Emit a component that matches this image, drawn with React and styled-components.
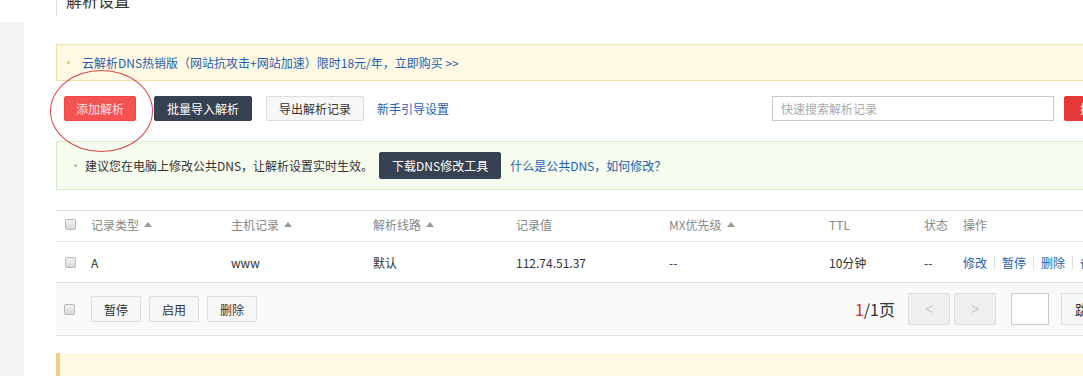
import React from 'react';
import styled, { createGlobalStyle } from 'styled-components';

const GlobalStyle = createGlobalStyle`
    html, body {
        margin: 0;
        padding: 0;
        background: #fff;
        overflow: hidden;
    }
    body {
        font-family: "Noto Sans CJK SC", "Liberation Sans", sans-serif;
        font-size: 12px;
        color: #333;
    }
`;

const Page = styled.div`
    display: flex;
    width: 1140px;
    height: 376px;
    overflow: hidden;
`;

const Sidebar = styled.div`
    width: 24px;
    margin-top: 22px;
    background: #f4f4f4;
    flex-shrink: 0;
`;

const Main = styled.div`
    padding-left: 32px;
    width: 1064px;
`;

const Title = styled.div`
    margin-top: -12px;
    height: 28px;
    border-left: 1px solid #ddd;
    padding-left: 9px;
    font-size: 16px;
    line-height: 24px;
    color: #333;
`;

const Notice = styled.div`
    display: flex;
    align-items: center;
    gap: 6px;
    height: ${(p) => p.$h}px;
    margin-top: ${(p) => p.$mt}px;
    padding-left: ${(p) => p.$pl}px;
    background: ${(p) => (p.$green ? '#f6fcee' : '#fff9e3')};
    border: 1px solid ${(p) => (p.$green ? '#d9ebc6' : '#f1dfaa')};
    border-right: none;
    box-sizing: border-box;
`;

const Bullet = styled.span`
    width: 3px;
    height: 3px;
    border-radius: 50%;
    background: ${(p) => (p.$green ? '#a8c98a' : '#e6c46a')};
    margin-right: ${(p) => p.$mr}px;
`;

const Link = styled.a`
    color: #1f5fae;
    text-decoration: none;
    cursor: pointer;
    white-space: nowrap;
`;

const Toolbar = styled.div`
    display: flex;
    align-items: center;
    margin-top: 15px;
    height: 25px;
    padding-left: 8px;
    position: relative;
`;

const Button = styled.button`
    height: ${(p) => p.$h || 25}px;
    padding: 0 ${(p) => p.$px || 14}px;
    margin-right: ${(p) => p.$mr || 0}px;
    font-family: inherit;
    font-size: 12px;
    border-radius: 2px;
    cursor: pointer;
    white-space: nowrap;
    border: 1px solid
        ${(p) => (p.$kind === 'red' ? '#f04848' : p.$kind === 'dark' ? '#354050' : '#ddd')};
    background: ${(p) =>
        p.$kind === 'red' ? '#f55252' : p.$kind === 'dark' ? '#364152' : '#f7f7f7'};
    color: ${(p) => (p.$kind === 'red' ? '#fde0e0' : p.$kind === 'dark' ? '#fff' : '#333')};
`;

const Ring = styled.span`
    position: absolute;
    left: -6px;
    top: -26px;
    width: 101px;
    height: 80px;
    border: 1px solid #d94a4a;
    border-radius: 50%;
    pointer-events: none;
`;

const Search = styled.div`
    display: flex;
    margin-left: auto;
    gap: 10px;
`;

const SearchInput = styled.input`
    width: 282px;
    height: 25px;
    box-sizing: border-box;
    border: 1px solid #c8c8c8;
    padding: 0 8px;
    font-family: inherit;
    font-size: 12px;
    outline: none;
    &::placeholder {
        color: #aaa;
    }
`;

const SearchButton = styled.button`
    width: 56px;
    height: 25px;
    border: none;
    border-radius: 2px;
    background: #e63838;
    color: #fff;
    font-family: inherit;
    font-size: 12px;
`;

const Table = styled.div`
    margin-top: 20px;
    border-top: 1px solid #e2e2e2;
    border-bottom: 1px solid #e2e2e2;
`;

const Row = styled.div`
    display: grid;
    grid-template-columns: 35px 140px 142px 143px 153px 160px 95px 39px auto;
    align-items: center;
    box-sizing: border-box;
    height: ${(p) => p.$h}px;
    padding-bottom: ${(p) => p.$pb}px;
    border-bottom: 1px solid #e2e2e2;
    color: ${(p) => (p.$head ? '#888' : '#333')};
`;

const Cell = styled.div`
    display: flex;
    align-items: center;
    gap: 5px;
    white-space: nowrap;
    padding-left: ${(p) => p.$pl || 0}px;
`;

const Arrow = styled.span`
    width: 0;
    height: 0;
    border-left: 4px solid transparent;
    border-right: 4px solid transparent;
    border-bottom: 5px solid #999;
`;

const Check = styled.span`
    display: inline-block;
    width: 11px;
    height: 11px;
    border: 1px solid #b8b8b8;
    border-radius: 2px;
    background: linear-gradient(#f2f2f2, #d8d8d8);
    box-sizing: border-box;
`;

const Ops = styled.div`
    display: flex;
    align-items: center;
    white-space: nowrap;
`;

const Sep = styled.span`
    width: 1px;
    height: 13px;
    background: #ddd;
    margin: 0 7px;
`;

const Footer = styled.div`
    display: flex;
    align-items: center;
    height: 52px;
    background: #f9f9f9;
    padding: 0 9px 0 8px;
`;

const FootButtons = styled.div`
    display: flex;
    gap: 8px;
    margin-left: 16px;
`;

const Pager = styled.div`
    display: flex;
    align-items: center;
    margin-left: auto;
`;

const PageText = styled.span`
    font-size: 16px;
    color: #333;
    margin-right: 13px;
    b {
        font-weight: normal;
        color: #c33;
    }
`;

const PageButton = styled.button`
    width: 42px;
    height: 32px;
    margin-right: 4px;
    border: 1px solid #ddd;
    background: #efefef;
    color: #ccc;
    font-size: 14px;
    font-family: "Liberation Sans", sans-serif;
    border-radius: 2px;
`;

const PageInput = styled.input`
    width: 38px;
    height: 32px;
    margin-left: 11px;
    margin-right: 12px;
    box-sizing: border-box;
    border: 1px solid #ccc;
    background: #fff;
`;

const JumpButton = styled.button`
    width: 50px;
    height: 32px;
    border: 1px solid #ddd;
    background: #f7f7f7;
    font-family: inherit;
    font-size: 14px;
    color: #333;
    text-align: left;
    padding-left: 13px;
`;

const BottomNotice = styled.div`
    margin-top: 17px;
    height: 40px;
    background: #fff9e3;
    border-left: 4px solid #f2cf86;
`;

const columns = [
    { label: '记录类型', sort: true },
    { label: '主机记录', sort: true },
    { label: '解析线路', sort: true },
    { label: '记录值' },
    { label: 'MX优先级', sort: true },
    { label: 'TTL' },
    { label: '状态' },
    { label: '操作' },
];

const record = ['A', 'www', '默认', '112.74.51.37', '--', '10分钟', '--'];

export default function App() {
    return (
        <>
            <GlobalStyle />
            <Page>
                <Sidebar />
                <Main>
                    <Title>解析设置</Title>

                    <Notice $h={37} $mt={28} $pl={10}>
                        <Bullet $mr={6} />
                        <Link>云解析DNS热销版（网站抗攻击+网站加速）限时18元/年，立即购买 &gt;&gt;</Link>
                    </Notice>

                    <Toolbar>
                        <Ring />
                        <Button $kind="red" $px={11} $mr={18}>添加解析</Button>
                        <Button $kind="dark" $px={12} $mr={14}>批量导入解析</Button>
                        <Button $px={12} $mr={13}>导出解析记录</Button>
                        <Link>新手引导设置</Link>
                        <Search>
                            <SearchInput placeholder="快速搜索解析记录" />
                            <SearchButton>搜索</SearchButton>
                        </Search>
                    </Toolbar>

                    <Notice $green $h={49} $mt={20} $pl={17}>
                        <Bullet $green $mr={2} />
                        <span>建议您在电脑上修改公共DNS，让解析设置实时生效。</span>
                        <Button $kind="dark" $h={27} $px={12} $mr={3}>下载DNS修改工具</Button>
                        <Link>什么是公共DNS，如何修改？</Link>
                    </Notice>

                    <Table>
                        <Row $head $h={31} $pb={3}>
                            <Cell $pl={9}><Check /></Cell>
                            {columns.map((c) => (
                                <Cell key={c.label}>
                                    {c.label}
                                    {c.sort && <Arrow />}
                                </Cell>
                            ))}
                        </Row>
                        <Row $h={41} $pb={0}>
                            <Cell $pl={9}><Check /></Cell>
                            {record.map((v, i) => (
                                <Cell key={i}>{v}</Cell>
                            ))}
                            <Ops>
                                <Link>修改</Link>
                                <Sep />
                                <Link>暂停</Link>
                                <Sep />
                                <Link>删除</Link>
                                <Sep />
                                <Link>备注</Link>
                            </Ops>
                        </Row>
                        <Footer>
                            <Check />
                            <FootButtons>
                                <Button $h={26} $px={12}>暂停</Button>
                                <Button $h={26} $px={12}>启用</Button>
                                <Button $h={26} $px={12}>删除</Button>
                            </FootButtons>
                            <Pager>
                                <PageText><b>1</b>/1页</PageText>
                                <PageButton>&lt;</PageButton>
                                <PageButton>&gt;</PageButton>
                                <PageInput />
                                <JumpButton>跳转</JumpButton>
                            </Pager>
                        </Footer>
                    </Table>

                    <BottomNotice />
                </Main>
            </Page>
        </>
    );
}
